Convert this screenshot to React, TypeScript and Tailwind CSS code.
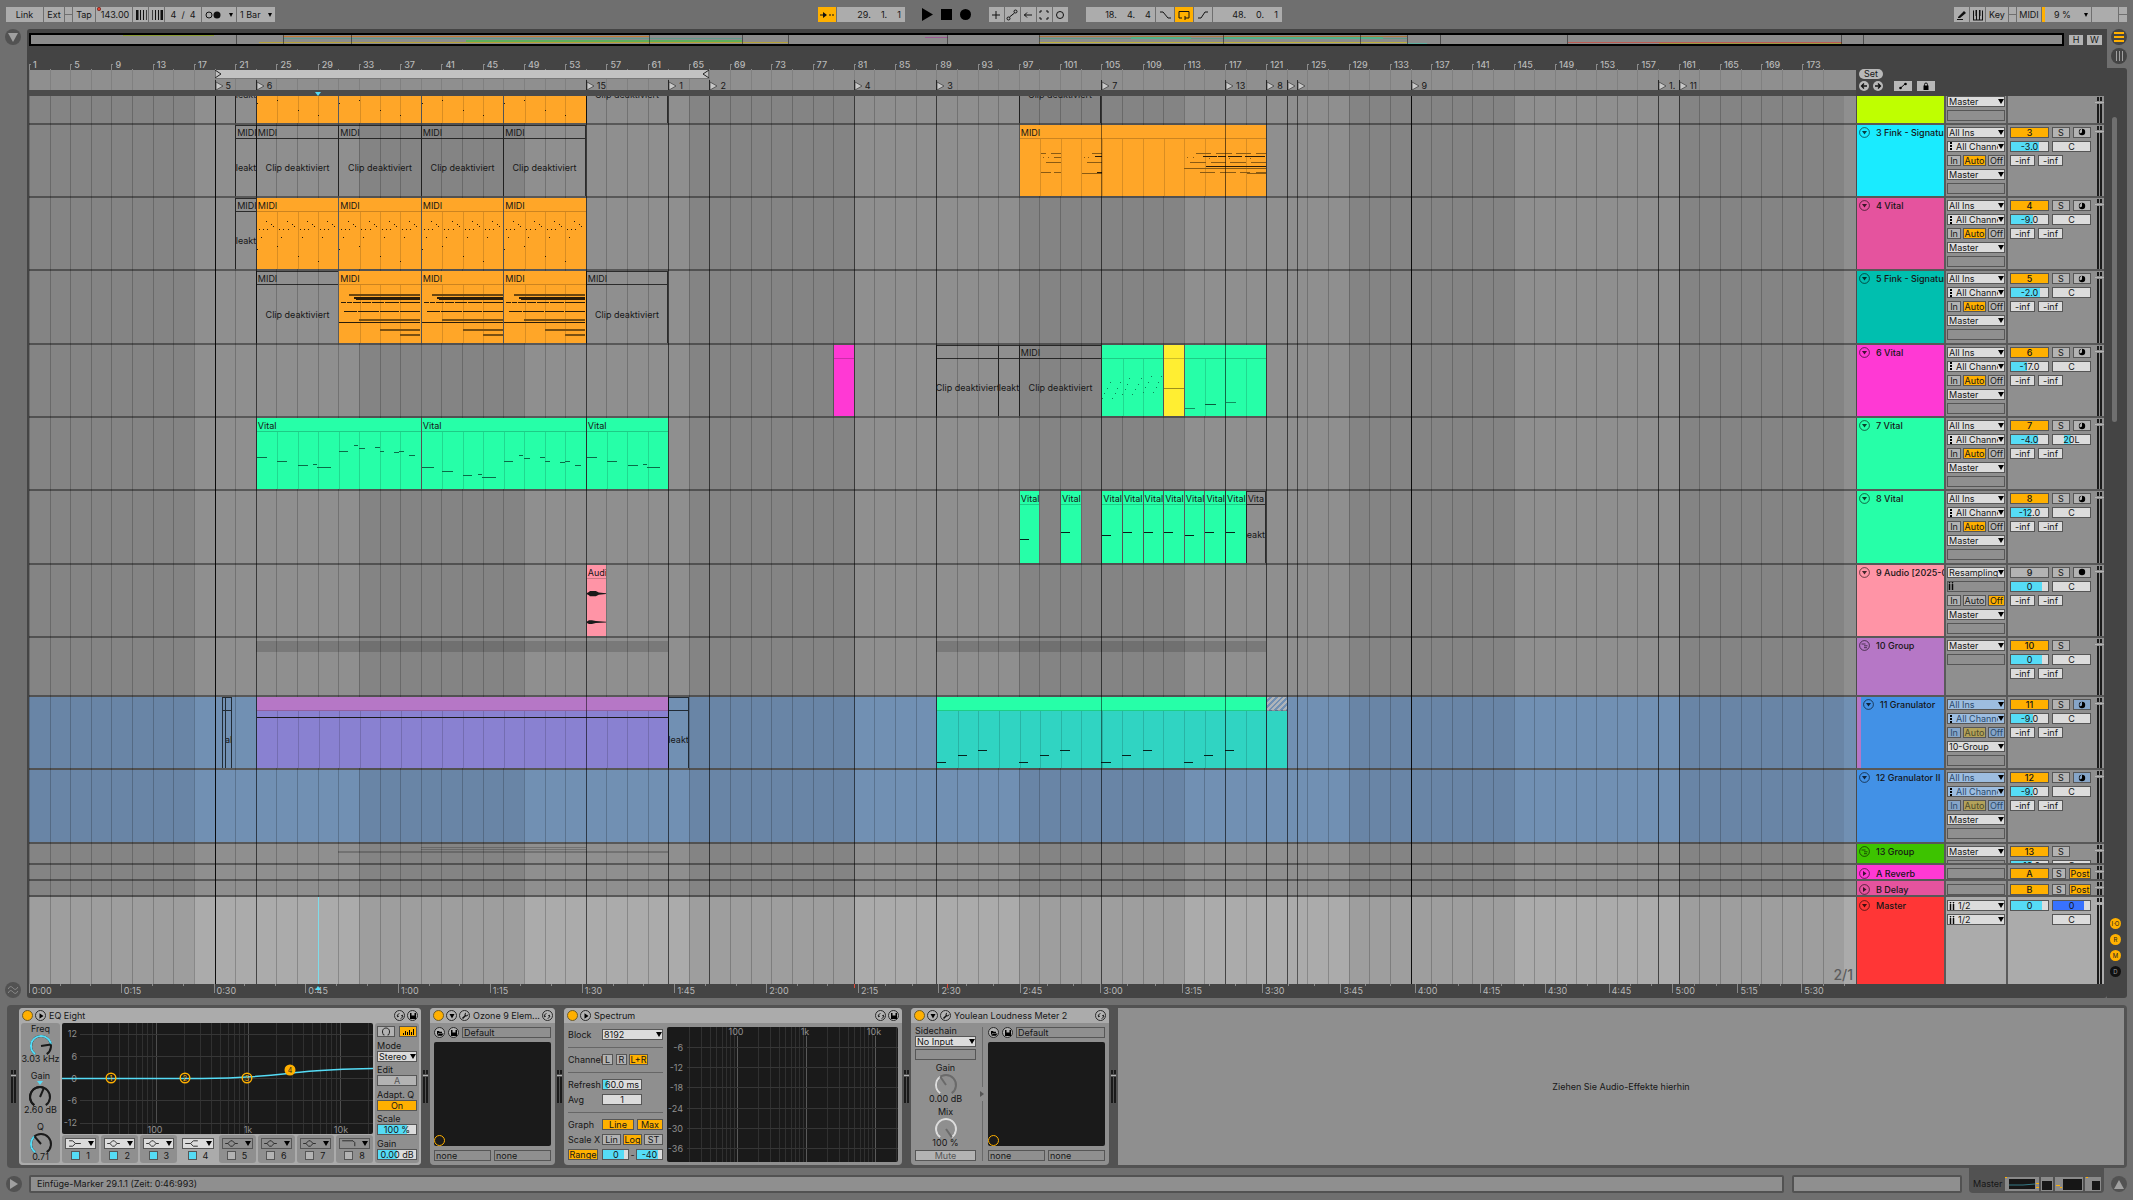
import type { ReactNode } from 'react';
import clsx from 'clsx';

const BARS = 177.2;
const pct = (bar: number) => `${((bar - 1) / BARS) * 100}%`;
const span = (bars: number) => `${(bars / BARS) * 100}%`;

// x, width in tenths of a bar; y, height in pixels of the clip body
type Note = [x: number, y: number, w: number, h?: number, color?: string];

type ClipData = {
  from: number;
  to: number;
  title?: string;
  off?: boolean;
  short?: string;
  head?: string;
  body?: string;
  notes?: Note[];
  kind?: 'audio' | 'group' | 'empty';
};

type TrackData = {
  name: string;
  num?: string;
  color: string;
  type: 'midi' | 'audio' | 'group' | 'return' | 'master';
  clips: ClipData[];
  vol?: string;
  fill?: number;
  pan?: string;
  selected?: boolean;
  nested?: boolean;
  tail?: boolean;
  out?: string;
};

const ORANGE = 'bg-[#ffa628]';
const GREEN = 'bg-[#26ffa8]';

const repeat = (notes: Note[], step: number, count: number): Note[] =>
  Array.from({ length: count }, (_, i) =>
    notes.map(([x, y, w, h, c]): Note => [x + i * step, y, w, h, c]),
  ).flat();

const tinted = (notes: Note[], color: string): Note[] => notes.map(([x, y, w]): Note => [x, y, w, 1, color]);

const dotNotes: Note[] = [
  ...repeat(
    [[2, 17, 1], [6, 17, 1], [10, 17, 1], [9, 9, 1], [14, 12, 1], [16, 14, 1], [4, 25, 1]],
    20,
    4,
  ),
  [0, 37, 1],
  [20, 34, 1],
  [40, 44, 1],
  [60, 49, 1],
];

const chordNotes: Note[] = [
  [10, 9, 70, 2, '#6b460f'],
  [15, 12, 65, 2],
  [17, 14, 63, 1],
  [2, 17, 5], [8, 17, 5], [14, 17, 8], [23, 17, 8], [32, 17, 12], [45, 17, 14], [60, 17, 20],
  [5, 26, 13], [19, 26, 20], [40, 26, 19], [60, 26, 20],
  [20, 34, 60, 2, '#7a5011'],
  [0, 37, 80],
  [40, 44, 40, 2, '#7a5011'],
  [60, 49, 20, 2, '#7a5011'],
];

const B = '#8a5a12';
const finkNotes: Note[] = [
  [20, 14, 5, 1, B], [30, 14, 10, 1, B], [33, 18, 7, 1, B], [22, 18, 1, 1, B], [27, 18, 1, 1, B],
  [25, 23, 15, 1, B], [20, 33, 10, 1, B], [33, 33, 7, 1, B],
  [70, 14, 10, 1, B], [73, 17, 7], [62, 18, 1, 1, B], [66, 18, 1, 1, B], [65, 23, 15, 1, B],
  [60, 34, 20, 1, B], [75, 33, 5],
  [171, 14, 15, 1, B], [191, 14, 15, 1, B], [210, 14, 15, 1, B], [230, 14, 10, 1, B],
  [178, 17, 14], [193, 17, 8], [203, 17, 13], [219, 17, 20],
  [163, 18, 1, 1, B], [168, 18, 1, 1, B], [184, 19, 1, 1, B], [204, 19, 1, 1, B], [224, 19, 1, 1, B],
  [166, 23, 15, 1, B], [186, 23, 15, 1, B], [205, 23, 15, 1, B], [225, 23, 15, 1, B],
  [181, 27, 59, 1], [160, 29, 80, 1, B],
  [175, 33, 15, 1, B], [195, 33, 15, 1, B], [214, 33, 10, 1, B], [230, 33, 10, 1, B], [221, 34, 19, 1, B],
];

const vitalA: Note[] = tinted([[0, 25, 10], [20, 29, 9], [40, 33, 10], [55, 32, 4], [59, 35, 13]], '#0b6b47');
const vitalLong: Note[] = [
  ...vitalA,
  ...tinted([
    [80, 19, 9], [95, 13, 4], [100, 16, 5], [115, 15, 5], [120, 19, 4], [134, 20, 5], [139, 19, 4], [148, 23, 6],
  ], '#0b6b47'),
];
const vitalLow: Note[] = tinted([
  [0, 35, 12], [20, 39, 10], [40, 43, 9], [55, 42, 4], [59, 45, 13],
  [80, 29, 9], [95, 23, 4], [100, 26, 5], [115, 25, 5], [120, 29, 5], [135, 30, 5], [140, 29, 4], [149, 33, 6],
], '#0b6b47');
const sparkle: Note[] = tinted([
  [0, 39, 1], [2, 34, 1], [5, 29, 1], [8, 23, 1], [10, 39, 1], [13, 34, 1], [15, 29, 1], [18, 23, 1],
  [20, 35, 1], [23, 30, 1], [25, 25, 1], [27, 19, 1], [30, 35, 1], [33, 30, 1], [35, 25, 1], [38, 19, 1],
  [40, 33, 1], [42, 28, 1], [45, 23, 1], [48, 17, 1], [50, 33, 1], [53, 28, 1], [55, 23, 1], [58, 17, 1],
], '#0e8458');

const off = (from: number, to: number, title = '', short?: string): ClipData => ({ from, to, title, short, off: true });
const vitalBlip = (from: number, y: number): ClipData => ({
  from,
  to: from + 2,
  title: 'Vital',
  head: GREEN,
  body: GREEN,
  notes: [[0, y, 9, 1, '#04221a']],
});
const midi = (from: number, to: number, notes: Note[]): ClipData => ({
  from, to, title: 'MIDI', head: ORANGE, body: ORANGE, notes,
});

const tracks: TrackData[] = [
  {
    name: '2', color: 'bg-[#bfff00]', type: 'midi', tail: true,
    clips: [off(21, 23, '', 'leakt'), ...[23, 31, 39, 47].map((b) => midi(b, b + 8, dotNotes)), off(55, 63), off(97, 105)],
  },
  {
    name: '3 Fink - Signature', num: '3', color: 'bg-[#1aebff]', type: 'midi', vol: '-3.0', fill: 76,
    clips: [off(21, 23, 'MIDI', 'leakt'), ...[23, 31, 39, 47].map((b) => off(b, b + 8, 'MIDI')), midi(97, 121, finkNotes)],
  },
  {
    name: '4 Vital', num: '4', color: 'bg-[#e5539e]', type: 'midi', vol: '-9.0', fill: 60,
    clips: [off(21, 23, 'MIDI', 'leakt'), ...[23, 31, 39, 47].map((b) => midi(b, b + 8, dotNotes))],
  },
  {
    name: '5 Fink - Signature', num: '5', color: 'bg-[#00bfaf]', type: 'midi', vol: '-2.0', fill: 79,
    clips: [off(23, 31, 'MIDI'), ...[31, 39, 47].map((b) => midi(b, b + 8, chordNotes)), off(55, 63, 'MIDI')],
  },
  {
    name: '6 Vital', num: '6', color: 'bg-[#ff39d4]', type: 'midi', vol: '-17.0', fill: 42,
    clips: [
      { from: 79, to: 81, head: 'bg-[#ff39d4]', body: 'bg-[#ff39d4]' },
      off(89, 95),
      off(95, 97, '', 'leakt'),
      off(97, 105, 'MIDI'),
      { from: 105, to: 111, head: GREEN, body: GREEN, notes: sparkle },
      { from: 111, to: 113, head: 'bg-[#ffee32]', body: 'bg-[#ffee32]', notes: [[0, 29, 20, 1, '#9b8f1c']] },
      {
        from: 113, to: 121, head: GREEN, body: GREEN,
        notes: [[0, 49, 10, 1, '#0f8f5e'], [20, 45, 10, 1, '#0b5a3c'], [40, 43, 10, 1, '#0f8f5e']],
      },
    ],
  },
  {
    name: '7 Vital', num: '7', color: 'bg-[#26ffa8]', type: 'midi', vol: '-4.0', fill: 74, pan: '20L',
    clips: [
      { from: 23, to: 39, title: 'Vital', head: GREEN, body: GREEN, notes: vitalLong },
      { from: 39, to: 55, title: 'Vital', head: GREEN, body: GREEN, notes: vitalLow },
      { from: 55, to: 63, title: 'Vital', head: GREEN, body: GREEN, notes: vitalA },
    ],
  },
  {
    name: '8 Vital', num: '8', color: 'bg-[#26ffa8]', type: 'midi', vol: '-12.0', fill: 54,
    clips: [
      vitalBlip(97, 34), vitalBlip(101, 27), vitalBlip(105, 30), vitalBlip(107, 27), vitalBlip(109, 27),
      vitalBlip(111, 27), vitalBlip(113, 30), vitalBlip(115, 27), vitalBlip(117, 27), off(119, 121, 'Vita', 'eakt'),
    ],
  },
  {
    name: '9 Audio [2025-0', num: '9', color: 'bg-[#ff94a6]', type: 'audio', vol: '0', fill: 83,
    clips: [{ from: 55, to: 57, title: 'Audi', head: 'bg-[#ff94a6]', body: 'bg-[#ff94a6]', kind: 'audio' }],
  },
  {
    name: '10 Group', num: '10', color: 'bg-[#b677c6]', type: 'group', vol: '0', fill: 83,
    clips: [{ from: 23, to: 63, kind: 'group' }, { from: 89, to: 121, kind: 'group' }],
  },
  {
    name: '11 Granulator', num: '11', color: 'bg-[#4291e6]', type: 'midi', vol: '-9.0', fill: 60,
    selected: true, nested: true, out: '10-Group',
    clips: [
      off(19.7, 20, '', ' '),
      off(20, 20.7, '', 'al'),
      { from: 23, to: 63, head: 'bg-[#b677c6]', body: 'bg-[#8981d1]', notes: [[0, 6, 400, 1, '#1a1a1a']] },
      off(63, 65, '', 'leakt'),
      {
        from: 89, to: 121, head: GREEN, body: 'bg-[#30d4c2]',
        notes: repeat(tinted([[0, 51, 9], [20, 44, 9], [40, 39, 9]], '#06231f'), 80, 4),
      },
      {
        from: 121, to: 123, body: 'bg-[#30d4c2]',
        head: 'bg-[repeating-linear-gradient(135deg,#aeb4ba_0_2px,#7190b3_2px_4px)]',
      },
    ],
  },
  {
    name: '12 Granulator II', num: '12', color: 'bg-[#4291e6]', type: 'midi', vol: '-9.0', fill: 60,
    selected: true, clips: [],
  },
  { name: '13 Group', num: '13', color: 'bg-[#3dc300]', type: 'group', vol: '-10.0', fill: 58, clips: [] },
  { name: 'A Reverb', num: 'A', color: 'bg-[#ff39d4]', type: 'return', clips: [] },
  { name: 'B Delay', num: 'B', color: 'bg-[#e5539e]', type: 'return', clips: [] },
  { name: 'Master', color: 'bg-[#ff3636]', type: 'master', clips: [] },
];

const locators = [
  { bar: 19, name: '5', strong: true }, { bar: 23, name: '6' }, { bar: 55, name: '15' }, { bar: 63, name: '1' },
  { bar: 67, name: '2' }, { bar: 81, name: '4' }, { bar: 89, name: '3' }, { bar: 105, name: '7' },
  { bar: 117, name: '13' }, { bar: 121, name: '8' }, { bar: 123, name: '' }, { bar: 124, name: '' },
  { bar: 135, name: '9', strong: true }, { bar: 159, name: '1.' }, { bar: 161, name: '11' },
];

const times: [string, number][] = [
  ['0:00', 1], ['0:15', 9.9], ['0:30', 18.9], ['0:45', 27.8], ['1:00', 36.8], ['1:15', 45.7], ['1:30', 54.6],
  ['1:45', 63.6], ['2:00', 72.5], ['2:15', 81.4], ['2:30', 89.2], ['2:45', 97.1], ['3:00', 104.9], ['3:15', 112.8],
  ['3:30', 120.6], ['3:45', 128.2], ['4:00', 135.4], ['4:15', 141.7], ['4:30', 148], ['4:45', 154.2],
  ['5:00', 160.4], ['5:15', 166.7], ['5:30', 172.9],
];

const evenBars = Array.from({ length: 88 }, (_, i) => 1 + i * 2);

/* ---------- small controls ---------- */

const box = 'box-border h-[11px] border border-[#565656] leading-[9px] text-center overflow-hidden shrink-0';

function Btn({ children, on, tone, className, label }: {
  children?: ReactNode; on?: boolean; tone?: string; className?: string; label?: string;
}) {
  return (
    <button
      aria-label={ label }
      className={ clsx(box, 'flex items-center justify-center whitespace-nowrap', tone ?? (on ? 'bg-[#ffb000]' : 'bg-[#b3b3b3]'), className) }
    >
      { children }
    </button>
  );
}

function Value({ value, fill = 0, from = 0, label, className, color = 'bg-[#55dcf6]' }: {
  value: string; fill?: number; from?: number; label: string; className?: string; color?: string;
}) {
  return (
    <span className={ clsx(box, 'relative block bg-[#dcdcdc]', className) }>
      <span className={ clsx('absolute inset-y-0', color) } style={ { left: `${from}%`, width: `${fill}%` } } />
      <input
        aria-label={ label }
        defaultValue={ value }
        className="relative block h-[9px] w-full bg-transparent text-center leading-[9px] outline-none"
      />
    </span>
  );
}

function Select({ value, label, className, icon, blue }: {
  value: string; label: string; className?: string; icon?: ReactNode; blue?: boolean;
}) {
  return (
    <span className={ clsx(box, 'relative flex items-center pl-px', blue ? 'bg-[#9dbde0] text-[#2c4a6b]' : 'bg-[#dcdcdc]', className) }>
      { icon }
      <select aria-label={ label } className="h-[9px] min-w-0 flex-1 appearance-none overflow-hidden bg-transparent leading-[9px] outline-none">
        <option>{ value }</option>
      </select>
      <svg viewBox="0 0 6 5" className="h-[5px] w-[6px] shrink-0"><path d="M0 0h6L3 5z" /></svg>
    </span>
  );
}

const Slot = ({ className, children }: { className?: string; children?: ReactNode }) => (
  <span className={ clsx(box, 'flex items-center', className) }>{ children }</span>
);

const MidiIcon = () => (
  <svg viewBox="0 0 5 8" className="mr-[2px] h-2 w-[5px] shrink-0"><path d="M1 0h2v2H1zM1 3h2v2H1zM1 6h2v2H1z" /></svg>
);
const StereoIcon = () => (
  <svg viewBox="0 0 6 8" className="mr-[3px] h-2 w-[6px] shrink-0">
    <path d="M1 0h1v1H1zM1 2h1v6H1zM4 0h1v1H4zM4 2h1v6H4z" stroke="#111" strokeWidth=".5" />
  </svg>
);

const Meter = ({ className }: { className?: string }) => (
  <div className={ clsx('flex flex-col gap-px', className) }>
    <div className="flex h-1 justify-center gap-px"><i className="w-[2px] bg-[#1a1a1a]" /><i className="w-[2px] bg-[#1a1a1a]" /></div>
    <div className="h-px bg-[#b3b3b3]" />
    <div className="flex flex-1 justify-center gap-px"><i className="w-[2px] bg-[#1a1a1a]" /><i className="w-[2px] bg-[#1a1a1a]" /></div>
  </div>
);

function Fold({ kind }: { kind: 'down' | 'right' | 'group' }) {
  return (
    <button aria-label="Fold track" className="size-[11px] shrink-0">
      <svg viewBox="0 0 11 11" className="size-[11px]" fill="none" stroke="#000" strokeOpacity=".65">
        <circle cx="5.5" cy="5.5" r="4.9" strokeWidth=".9" />
        { kind === 'down' && <path d="M3 4h5L5.5 7.5z" fill="#000" fillOpacity=".75" stroke="none" /> }
        { kind === 'right' && <path d="M4 3v5l3.500-2.500z" fill="#000" fillOpacity=".75" stroke="none" /> }
        { kind === 'group' && <path d="M2.500 4h4M5 5.800h3.500M5 7.700h3" strokeWidth=".9" /> }
      </svg>
    </button>
  );
}

function Knob({ value, color = '#55dcf6', rest = '#1a1a1a' }: { value: number; color?: string; rest?: string }) {
  const at = (v: number, r: number) => {
    const a = ((125 + v * 290) * Math.PI) / 180;
    return `${(12 + r * Math.cos(a)).toFixed(2)} ${(12 + r * Math.sin(a)).toFixed(2)}`;
  };
  const arc = (a: number, b: number) => `M${at(a, 10)}A10 10 0 ${(b - a) * 290 > 180 ? 1 : 0} 1 ${at(b, 10)}`;
  return (
    <svg viewBox="0 0 24 24" className="h-6 w-6" fill="none" strokeWidth="2">
      <path d={ arc(0, 1) } stroke={ rest } />
      { value > 0 && <path d={ arc(0, value) } stroke={ color } /> }
      <path d={ `M12 12L${at(value, 10)}` } stroke={ rest } />
    </svg>
  );
}

/* ---------- transport ---------- */

const tbtn = 'h-[15px] flex items-center justify-center shrink-0';
const gray = 'bg-[#acacac]';

function TransportIcon({ d, fill }: { d: string; fill?: boolean }) {
  return (
    <svg viewBox="0 0 14 14" className="h-[14px] w-[14px]" fill={ fill ? '#111' : 'none' } stroke={ fill ? 'none' : '#111' }>
      <path d={ d } />
    </svg>
  );
}

function TopBar() {
  return (
    <header className="flex h-[29px] items-start justify-between pt-[7px] pr-[6px] pl-[6px]">
      <div className="flex flex-[49] gap-px">
        <button className={ clsx(tbtn, gray, 'w-[37px]') }>Link</button>
        <button className={ clsx(tbtn, gray, 'w-5') }>Ext</button>
        <div className="flex w-[7px] flex-col gap-px"><i className="flex-1 bg-[#acacac]" /><i className="flex-1 bg-[#acacac]" /></div>
        <button className={ clsx(tbtn, gray, 'w-[22px]') }>Tap</button>
        <label className="relative">
          <input aria-label="Tempo" defaultValue="143.00" className={ clsx(tbtn, gray, 'w-9 pl-[2px] text-center') } />
          <i className="absolute top-0 left-px size-1 rounded-full border border-black/50 bg-[#ff4a36]" />
        </label>
        <button aria-label="Nudge down" className={ clsx(tbtn, gray, 'w-[15px]') }>
          <TransportIcon fill d="M2 2h2.500v10H2zM6 2h1v10H6zM9 2h1v10H9zM12 2h.7v10H12z" />
        </button>
        <button aria-label="Nudge up" className={ clsx(tbtn, gray, 'w-[15px]') }>
          <TransportIcon fill d="M2 2h.7v10H2zM5 2h1v10H5zM8 2h1v10H8zM10.500 2H13v10h-2.500z" />
        </button>
        <input aria-label="Signature" defaultValue="4  /  4" className={ clsx(tbtn, gray, 'w-9 text-center') } />
        <button aria-label="Metronome" className={ clsx(tbtn, gray, 'w-[34px] gap-2') }>
          <svg viewBox="0 0 16 8" className="h-2 w-4"><circle cx="4" cy="4" r="3" fill="none" stroke="#111" /><circle cx="12" cy="4" r="3.500" fill="#111" /></svg>
          <svg viewBox="0 0 4 4" className="size-1"><path d="M0 0h4L2 4z" /></svg>
        </button>
        <label className={ clsx(tbtn, gray, 'w-[38px]') }>
          <select aria-label="Quantization" className="w-7 appearance-none bg-transparent"><option>1 Bar</option></select>
          <svg viewBox="0 0 4 4" className="size-1"><path d="M0 0h4L2 4z" /></svg>
        </label>
      </div>

      <div className="flex items-start gap-px">
        <button aria-label="Follow" className={ clsx(tbtn, 'w-[18px] bg-[#ffb000]') }>
          <TransportIcon fill d="M0 6.500h3V4l4 3-4 3V7.500H0zM9 6.500h2v1H9zM12 6.500h2v1h-2z" />
        </button>
        <input aria-label="Arrangement position" defaultValue="29.    1.    1" className={ clsx(tbtn, gray, 'w-[68px] pr-1 text-right') } />
        <div className="flex h-[15px] w-[82px] items-center justify-center gap-2">
          <button aria-label="Play"><svg viewBox="0 0 11 13" className="h-[13px] w-[11px]"><path d="M0 0v13l11-6.500z" /></svg></button>
          <button aria-label="Stop" className="h-[11px] w-[11px] bg-black" />
          <button aria-label="Record" className="size-[11px] rounded-full bg-black" />
        </div>
        { [
          'M7 3v8M3 7h8',
          'M2 10.500a1.500 1.500 0 1 0 3 0a1.500 1.500 0 1 0-3 0M4.500 9l5-4M9 3.500a1.500 1.500 0 1 0 3 0a1.500 1.500 0 1 0-3 0',
          'M11 7H3M6 4.500L3.500 7L6 9.500',
          'M3 5V3h2M9 3h2v2M11 9v2H9M5 11H3V9',
          'M3.500 7a3.500 3.500 0 1 0 7 0a3.500 3.500 0 1 0-7 0',
        ].map((d) => (
          <button key={ d } aria-label="Automation" className={ clsx(tbtn, gray, 'w-[15px]') }><TransportIcon d={ d } /></button>
        )) }
        <input aria-label="Loop start" defaultValue="18.    4.    4" className={ clsx(tbtn, gray, 'ml-[17px] w-[69px] pr-1 text-right') } />
        <button aria-label="Punch in" className={ clsx(tbtn, gray, 'w-[18px]') }><TransportIcon d="M2 4h3l5 6h3" /></button>
        <button aria-label="Loop" className={ clsx(tbtn, 'w-[18px] bg-[#ffb000]') }><TransportIcon d="M5 10H2V3.500h10V10H8M8 8v4" /></button>
        <button aria-label="Punch out" className={ clsx(tbtn, gray, 'w-[18px]') }><TransportIcon d="M2 10h3l4-6h3" /></button>
        <input aria-label="Loop length" defaultValue="48.    0.    1" className={ clsx(tbtn, gray, 'w-[69px] pr-1 text-right') } />
      </div>

      <div className="flex flex-[51] justify-end gap-px">
        <button aria-label="Draw mode" className={ clsx(tbtn, gray, 'w-[15px]') }><TransportIcon fill d="M3 9l6-6 2 2-6 5H3zM2 11h6v1H2z" /></button>
        <button aria-label="Computer keyboard" className={ clsx(tbtn, gray, 'w-[15px]') }>
          <TransportIcon d="M2.500 2.500v9.500M5.500 2v6M8.500 2v6M11.500 2.500v9.500M5.500 8v4M8.500 8v4M2 12h10M5 2v6M9 2v6" />
        </button>
        <button className={ clsx(tbtn, gray, 'w-[22px]') }>Key</button>
        <div className="flex w-[7px] flex-col gap-px"><i className="flex-1 bg-[#acacac]" /><i className="flex-1 bg-[#acacac]" /></div>
        <button className={ clsx(tbtn, gray, 'w-6') }>MIDI</button>
        <label className={ clsx(tbtn, gray, 'w-[49px] pr-[3px]') }>
          <i className="h-full w-[3px] bg-[#ffb000]" />
          <select aria-label="CPU load" className="flex-1 appearance-none bg-transparent pl-[9px]"><option>9 %</option></select>
          <svg viewBox="0 0 4 4" className="size-1"><path d="M0 0h4L2 4z" /></svg>
        </label>
        <div className={ clsx(tbtn, gray, 'w-[26px]') } />
        <div className="flex w-[8px] flex-col gap-px"><i className="flex-1 bg-[#acacac]" /><i className="flex-1 bg-[#acacac]" /></div>
      </div>
    </header>
  );
}

/* ---------- arrangement ---------- */

function Overview() {
  // x, y, width, height, colour on a 2035 x 9 strip
  const marks: [number, number, number, number, string][] = [
    [92, 0, 91, 1, '#8a9c34'], [252, 1, 367, 1, '#c07a34'], [252, 3, 460, 1, '#5f9a8c'], [228, 7, 530, 1, '#b5a038'],
    [436, 5, 276, 2, '#5fae5a'], [896, 2, 23, 1, '#9c5a92'], [1010, 1, 369, 1, '#a9763e'], [1010, 3, 369, 1, '#5c9a84'],
    [1102, 2, 60, 2, '#4fb28a'], [1195, 2, 160, 2, '#4fb28a'], [1010, 7, 369, 1, '#bdb03c'], [1010, 9, 369, 1, '#a59c48'],
    [1379, 8, 20, 1, '#5faea0'], [1540, 7, 275, 1, '#bb5a52'], [1631, 8, 184, 1, '#9c9a42'],
  ];
  return (
    <div className="h-[13px] flex-1 border-2 border-black bg-[#8b8b8b]">
      <svg viewBox="0 0 2035 9" preserveAspectRatio="none" className="block h-full w-full" shapeRendering="crispEdges">
        { marks.map(([x, y, w, h, c], i) => <rect key={ i } x={ x } y={ y } width={ w } height={ h } fill={ c } />) }
        { [205, 252, 321, 619, 712, 758, 918, 1010, 1194, 1332, 1379, 1412, 1539, 1814, 1836].map((x) => (
          <rect key={ x } x={ x } y="0" width="1" height="9" fill="#000" fillOpacity=".45" />
        )) }
      </svg>
    </div>
  );
}

function Clip({ clip, edge }: { clip: ClipData; edge: boolean }) {
  const { from, to, title, head, body, notes, kind, short } = clip;
  const bars = to - from;
  const style = { left: pct(from), width: span(bars) };

  if (kind === 'group') {
    return <div className="absolute top-[3px] z-20 h-[11px] bg-black/15" style={ style } />;
  }
  if (clip.off) {
    return (
      <div className={ clsx('absolute inset-y-0 z-20 flex flex-col overflow-hidden border-t border-l border-black/70', edge && 'border-r') } style={ style }>
        <div className="h-[13px] shrink-0 border-b border-black/70 pl-px leading-[13px] whitespace-nowrap">{ title }</div>
        <div className="flex flex-1 items-center justify-center overflow-hidden pt-px whitespace-nowrap">{ short ?? 'Clip deaktiviert' }</div>
      </div>
    );
  }

  const lines = bars > 2 ? Array.from({ length: Math.ceil(bars / 2) - 1 }, (_, i) => ((i + 1) * 2 * 100) / bars) : [];
  return (
    <div className="absolute inset-y-0 z-20 flex flex-col overflow-hidden border-l border-black/20" style={ style }>
      <div className={ clsx('h-[14px] shrink-0 border-b border-black/20 pl-px leading-[15px] whitespace-nowrap', head) }>{ title }</div>
      <div className={ clsx('relative flex-1 overflow-hidden', body) }>
        { lines.map((l) => <i key={ l } className="absolute inset-y-0 w-px bg-black/15" style={ { left: `${l}%` } } />) }
        { notes && (
          <svg viewBox={ `0 0 ${bars * 10} 58` } preserveAspectRatio="none" className="absolute top-0 left-0 h-[58px] w-full" shapeRendering="crispEdges">
            { notes.map(([x, y, w, h = 1, c = '#2a1c08'], i) => <rect key={ i } x={ x } y={ y } width={ w } height={ h } fill={ c } />) }
          </svg>
        ) }
        { kind === 'audio' && (
          <svg viewBox="0 0 20 58" preserveAspectRatio="none" className="absolute top-0 left-0 h-[58px] w-full" fill="#1a1a1a">
            <path d="M0 14l2-1 1-1h6l3 1.500 8 .8v.7l-8 .8-3 1.500H3l-1-1-2-1zM0 42.500l2-1.200h3l4 .8 11 .6v.7l-11 .6-4 1H2l-2-1z" />
          </svg>
        ) }
      </div>
    </div>
  );
}

function Clips({ clips }: { clips: ClipData[] }) {
  return clips.map((c) => <Clip key={ c.from } clip={ c } edge={ !clips.some((n) => n.from === c.to) } />);
}

function TrackHeader({ track }: { track: TrackData }) {
  const { type, selected: blue, num } = track;
  const tint = blue ? 'bg-[#86a5c8] text-[#2c4a6b]' : undefined;
  const isMaster = type === 'master';
  const fold = type === 'group' ? 'group' : type === 'return' ? 'right' : 'down';
  const top = type === 'return' || isMaster ? 'pt-[3px]' : 'pt-[2px]';

  return (
    <div className="flex w-[248px] shrink-0 overflow-hidden border-l border-[#4b4b4b]">
      <div className={ clsx('flex w-[87px] shrink-0 overflow-hidden', track.nested ? 'bg-[#b677c6] pl-1' : '') }>
        <div className={ clsx('flex flex-1 items-start gap-[6px] overflow-hidden pl-[2px] leading-[11px] font-medium whitespace-nowrap', top, track.color) }>
          { !track.tail && <Fold kind={ fold } /> }
          { !track.tail && <span>{ track.name }</span> }
        </div>
      </div>

      <div className={ clsx('flex w-16 shrink-0 flex-col gap-[3px] border-r-2 border-l-2 border-[#5a5a5a] pl-px', top, track.tail ? 'justify-end pb-[2px]' : '', isMaster ? 'bg-[#ababab]' : 'bg-[#8f8f8f]') }>
        { track.tail && (
          <>
            <Select label="Output" value="Master" className="w-[58px]" />
            <Slot className="w-[58px]" />
          </>
        ) }
        { !track.tail && (type === 'midi' || type === 'audio') && (
          <>
            <Select blue={ blue } label="Input type" value={ type === 'audio' ? 'Resampling' : 'All Ins' } className="w-[58px]" />
            { type === 'midi'
              ? <Select blue={ blue } label="Input channel" value="All Channels" icon={ <MidiIcon /> } className="w-[58px]" />
              : <Slot className="w-[58px]"><StereoIcon /></Slot> }
            <div className="flex w-[58px] justify-between">
              <Btn tone={ tint } className="w-[14px]">In</Btn>
              <Btn on={ type === 'midi' } tone={ blue ? 'bg-[#b3a25a] text-[#4d4a2c]' : undefined } className="w-[23px]">Auto</Btn>
              <Btn on={ type === 'audio' } tone={ tint } className="w-[17px]">Off</Btn>
            </div>
            <Select label="Output" value={ track.out ?? 'Master' } className="w-[58px]" />
            <Slot className="w-[58px]" />
          </>
        ) }
        { type === 'group' && (
          <>
            <Select label="Output" value="Master" className="w-[58px]" />
            <Slot className="w-[58px]" />
          </>
        ) }
        { type === 'return' && <Slot className="w-[58px]" /> }
        { isMaster && (
          <>
            <Select label="Cue out" value="1/2" icon={ <StereoIcon /> } className="w-[58px]" />
            <Select label="Master out" value="1/2" icon={ <StereoIcon /> } className="w-[58px]" />
          </>
        ) }
      </div>

      <div className={ clsx('flex flex-1 flex-col gap-[3px] pl-[2px]', top, isMaster ? 'bg-[#ababab]' : 'bg-[#8f8f8f]') }>
        { num && (
          <div className="flex gap-[3px]">
            <Btn on={ type !== 'audio' } className="w-[39px] font-medium">{ num }</Btn>
            <Btn className={ type === 'return' ? 'w-[14px]' : 'w-[18px]' }>S</Btn>
            { type === 'return' && <Btn on className="w-[22px]">Post</Btn> }
            { (type === 'midi' || type === 'audio') && (
              <Btn label="Arm" tone={ tint } className="w-[18px]">
                <svg viewBox="0 0 8 8" className="size-2">
                  <circle cx="4" cy="4" r="3.200" />
                  { type === 'midi' && <path d="M4 .5v4L1.800 5.500C.8 3.500 2 1.500 4 .5z" fill={ blue ? '#86a5c8' : '#b3b3b3' } /> }
                </svg>
              </Btn>
            ) }
          </div>
        ) }
        { track.vol && (
          <div className="flex gap-[3px]">
            <Value label="Volume" value={ track.vol } fill={ track.fill } className="w-[39px]" />
            <Value label="Pan" value={ track.pan ?? 'C' } from={ 31 } fill={ track.pan ? 18 : 0 } className="w-[39px]" />
          </div>
        ) }
        { track.vol && (
          <div className="flex gap-[3px]">
            <Value label="Send A" value="-inf" className="w-[25px]" />
            <Value label="Send B" value="-inf" className="w-[25px]" />
          </div>
        ) }
        { isMaster && (
          <>
            <div className="flex gap-[3px]">
              <Value label="Master volume" value="0" fill={ 83 } className="w-[39px]" />
              <Value label="Cue volume" value="0" fill={ 83 } color="bg-[#3872ff]" className="w-[39px]" />
            </div>
            <Value label="Master pan" value="C" className="ml-[42px] w-[39px]" />
          </>
        ) }
      </div>
      <Meter className={ clsx('w-[9px] pt-px', isMaster ? 'bg-[#ababab]' : 'bg-[#8f8f8f]') } />
    </div>
  );
}

function Arrangement() {
  return (
    <div className="flex min-w-0 flex-1 flex-col rounded-tl-[3px] rounded-b-[3px] bg-[#444] pt-1 pr-[3px] pl-[2px]">
      <div className="flex">
        <Overview />
        <div className="flex w-10 items-center justify-between pr-[2px] pl-[5px]">
          <button className="h-[10px] w-[14px] bg-[#b3b3b3] leading-[10px]">H</button>
          <button className="h-[10px] w-[15px] bg-[#b3b3b3] leading-[10px]">W</button>
        </div>
      </div>

      <div className="flex">
        <div className="min-w-0 flex-1">
          <div className="relative h-6 overflow-hidden text-[#b8b8b8]">
            { evenBars.map((b) => (
              <i key={ b } className={ clsx('absolute bottom-0 border-l border-[#8a8a8a]', b % 4 === 1 ? 'h-[6px] w-[2px] border-t' : 'h-px') } style={ { left: pct(b) } } />
            )) }
            { evenBars.filter((b) => b % 4 === 1 && b < 177).map((b) => (
              <span key={ b } className="absolute bottom-0 pl-1 leading-[10px] font-medium" style={ { left: pct(b) } }>{ b }</span>
            )) }
          </div>
          <div className="relative h-5 overflow-hidden bg-[#8f8f8f]">
            { evenBars.map((b) => <i key={ b } className="absolute inset-y-0 w-px bg-black/10" style={ { left: pct(b) } } />) }
            <div className="absolute top-0 flex h-[9px] items-center justify-between border-b border-[#777] bg-[#c2c2c2]" style={ { left: pct(19), width: span(48) } }>
              <svg viewBox="0 0 8 8" className="size-2"><path d="M0 0l6 4-6 4z" fill="#c2c2c2" stroke="#222" /></svg>
              <svg viewBox="0 0 8 8" className="size-2"><path d="M8 0L2 4l6 4z" fill="#c2c2c2" stroke="#222" /></svg>
            </div>
            { locators.map((l) => (
              <button key={ l.bar } className="absolute bottom-0 flex h-[10px] items-center gap-[2px] border-l border-black/70 leading-[10px]" style={ { left: pct(l.bar) } }>
                <svg viewBox="0 0 8 10" className="h-[10px] w-2"><path d="M0 2l7 4-7 4z" fill="#c8c8c8" stroke="#444" strokeWidth=".8" /></svg>
                <span className="pt-px">{ l.name }</span>
              </button>
            )) }
          </div>
          <div className="relative h-[6px] bg-[#4b4b4b]">
            <svg viewBox="0 0 6 4" className="absolute top-[2px] -ml-[3px] h-1 w-[6px]" style={ { left: pct(29) } }><path d="M0 0h6L3 4z" fill="#55dcf6" /></svg>
          </div>
        </div>
        <div className="flex w-[248px] flex-col gap-[2px] pt-[23px] pl-[3px]">
          <button className="h-[10px] w-6 rounded-full bg-[#b8b8b8] leading-[10px]">Set</button>
          <div className="flex items-center gap-1">
            <button aria-label="Previous locator" className="flex size-[10px] items-center justify-center rounded-full bg-[#b8b8b8]">
              <svg viewBox="0 0 8 8" className="size-2"><path d="M7 4H2M4 1.500L1.500 4 4 6.500" fill="none" stroke="#111" strokeWidth="1.300" /></svg>
            </button>
            <button aria-label="Next locator" className="flex size-[10px] items-center justify-center rounded-full bg-[#b8b8b8]">
              <svg viewBox="0 0 8 8" className="size-2"><path d="M1 4h5M4 1.500L6.500 4 4 6.500" fill="none" stroke="#111" strokeWidth="1.300" /></svg>
            </button>
            <button aria-label="Automation mode" className="ml-[7px] flex h-[10px] w-[18px] items-center justify-center bg-[#b8b8b8]">
              <svg viewBox="0 0 10 8" className="h-2 w-[10px]"><path d="M2 6.500L7.500 1.500" stroke="#111" /><circle cx="2.500" cy="6" r="1.300" /><circle cx="7.500" cy="2" r="1.300" /></svg>
            </button>
            <button aria-label="Lock envelopes" className="ml-[1px] flex h-[10px] w-[18px] items-center justify-center bg-[#b8b8b8]">
              <svg viewBox="0 0 8 8" className="size-2"><path d="M1.500 3.500h5V8h-5z" /><path d="M2.500 4V2.500a1.500 1.500 0 0 1 3 0V4" fill="none" stroke="#111" /></svg>
            </button>
          </div>
        </div>
      </div>

      <div className="relative grid min-h-0 flex-1 grid-rows-[minmax(0,86fr)_repeat(7,minmax(0,220fr))_minmax(0,177fr)_repeat(2,minmax(0,220fr))_minmax(0,65fr)_repeat(2,minmax(0,48fr))_minmax(0,260fr)]">
        { tracks.map((t) => (
          <div key={ t.name } className={ clsx('flex overflow-hidden', t.type !== 'master' && 'border-b-2 border-[#585858]') }>
            <div className={ clsx('relative min-w-0 flex-1 overflow-hidden', t.selected ? 'bg-[#7190b3]' : t.type === 'master' ? 'bg-[#ababab]' : 'bg-[#8f8f8f]') }>
              { t.tail
                ? <div className="absolute inset-x-0 bottom-0 h-[71px]"><Clips clips={ t.clips } /></div>
                : <Clips clips={ t.clips } /> }
              { t.name === '13 Group' && (
                <>
                  <i className="absolute top-[3px] z-20 h-[3px] border-y border-black/20" style={ { left: pct(39), width: span(16) } } />
                  <i className="absolute top-[7px] z-20 h-[2px] bg-black/20" style={ { left: pct(31), width: span(32) } } />
                </>
              ) }
              { t.type === 'master' && (
                <>
                  <i className="absolute inset-y-0 z-20 w-px bg-[#7fdcea]" style={ { left: pct(29) } } />
                  <span className="absolute right-[3px] bottom-px z-20 text-[14px] leading-[16px] font-medium text-[#5c5c5c]">2/1</span>
                </>
              ) }
            </div>
            <TrackHeader track={ t } />
          </div>
        )) }
        <div className="pointer-events-none absolute inset-y-0 right-[248px] left-0 overflow-hidden">
          { [1, 33, 65, 97, 129, 161].map((b) => (
            <i key={ b } className="absolute inset-y-0 z-10 bg-black/7" style={ { left: pct(b), width: span(16) } } />
          )) }
          { evenBars.map((b) => <i key={ b } className="absolute inset-y-0 z-10 w-px bg-black/20" style={ { left: pct(b) } } />) }
          { locators.map((l) => (
            <i key={ l.bar } className={ clsx('absolute inset-y-0 z-30 w-px', l.strong ? 'bg-black/90' : 'bg-black/50') } style={ { left: pct(l.bar) } } />
          )) }
        </div>
      </div>

      <div className="flex h-[14px]">
        <div className="relative min-w-0 flex-1 overflow-hidden text-[#b8b8b8]">
          { times.map(([label, bar]) => (
            <span key={ label } className="absolute top-0 h-[9px] border-l border-[#8a8a8a] pt-px pl-[2px] leading-[11px]" style={ { left: pct(bar) } }>{ label }</span>
          )) }
          { times.flatMap(([, bar], i) => {
            const next = times[i + 1]?.[1] ?? bar + 6.2;
            return [1, 2].map((k) => (
              <i key={ `${i}-${k}` } className="absolute top-0 h-[2px] w-px bg-[#8a8a8a]" style={ { left: pct(bar + ((next - bar) * k) / 3) } } />
            ));
          }) }
          <i className="absolute top-0 h-1 w-px bg-[#e04a3a]" style={ { left: pct(81) } } />
          <i className="absolute top-0 h-1 w-px bg-[#e04a3a]" style={ { left: pct(90) } } />
          <svg viewBox="0 0 6 4" className="absolute top-[2px] -ml-[3px] h-1 w-[6px]" style={ { left: pct(29) } }><path d="M0 4h6L3 0z" fill="#55dcf6" /></svg>
        </div>
        <div className="w-[248px]" />
      </div>
    </div>
  );
}

/* ---------- devices ---------- */

const roundBtn = 'flex size-[11px] shrink-0 items-center justify-center rounded-full border border-[#2a2a2a] bg-[#b3b3b3]';
const OnDot = () => <button aria-label="Device on" className="size-[11px] shrink-0 rounded-full border border-[#6b5a2a] bg-[#ffb000]" />;
const SwapBtn = () => (
  <button aria-label="Hot-swap" className={ roundBtn }>
    <svg viewBox="0 0 8 8" className="size-2" fill="none" stroke="#111"><path d="M1.500 4.500a2.500 2.500 0 0 1 2-3M6.500 3.500a2.500 2.500 0 0 1-2 3M1 3.500l.7 1.500 1.300-1M5 4l1.300-1L7 4.500" strokeWidth=".8" /></svg>
  </button>
);
const SaveBtn = () => (
  <button aria-label="Save" className={ roundBtn }>
    <svg viewBox="0 0 8 8" className="size-2"><path d="M1 1h1.500v2.500h3V1H7v6H1z" /></svg>
  </button>
);
const FolderBtn = () => (
  <button aria-label="Open" className={ roundBtn }>
    <svg viewBox="0 0 8 8" className="size-2"><path d="M1 2h2l.6.8H6V4H2.500L1 6.500zM2.800 4.500H7.500L6 6.800H1.500z" /></svg>
  </button>
);

function Device({ title, width, plugin, save, children }: {
  title: string; width: string; plugin?: boolean; save?: boolean; children: ReactNode;
}) {
  return (
    <section className={ clsx('flex shrink-0 flex-col overflow-hidden rounded bg-[#8f8f8f]', width) }>
      <div className="flex h-[15px] shrink-0 items-center gap-[2px] bg-[#ababab] px-[3px]">
        <OnDot />
        <button aria-label="Unfold" className={ roundBtn }>
          <svg viewBox="0 0 8 8" className="size-2">{ plugin ? <path d="M1.500 2h5L4 6.500z" /> : <path d="M2.500 1.200v5.600L6.500 4z" /> }</svg>
        </button>
        { plugin && (
          <button aria-label="Edit plug-in" className={ roundBtn }>
            <svg viewBox="0 0 8 8" className="size-2" fill="none" stroke="#111"><path d="M1.500 6.500L5 3" strokeWidth="1.600" /><path d="M7 2.500a1.500 1.500 0 1 1-2-1.500" /></svg>
          </button>
        ) }
        <h2 className="ml-px flex-1 whitespace-nowrap">{ title }</h2>
        <SwapBtn />
        { save && <SaveBtn /> }
      </div>
      { children }
    </section>
  );
}

const logLines = (left: number, decade: number, width: number) => {
  const out: { x: number; major: boolean }[] = [];
  for (let d = -1; d < 3; d++) {
    for (let n = 1; n < 10; n++) {
      const x = left + (d + Math.log10(n)) * decade;
      if (x > 18 && x < width) out.push({ x: Math.round(x), major: n === 1 });
    }
  }
  return out;
};

function EqGraph() {
  const handles: [number, number, string][] = [[49, 55, '1'], [123, 55, '2'], [185, 55, '3'], [228, 47, '4']];
  return (
    <svg viewBox="0 0 311 111" className="h-[111px] w-[311px] rounded-[2px] bg-[#1a1a1a] text-[9px]">
      { logLines(94, 92, 311).map((l) => (
        <rect key={ l.x } x={ l.x } y="0" width="1" height={ l.major ? 100 : 111 } fill={ l.major ? '#4e4e4e' : '#303030' } />
      )) }
      { [11, 33, 55, 77, 100].map((y) => <rect key={ y } x="18" y={ y } width="293" height="1" fill="#363636" />) }
      <g fill="#909090" textAnchor="end">
        <text x="15" y="14">12</text><text x="15" y="37">6</text><text x="15" y="59">0</text>
        <text x="15" y="81">-6</text><text x="15" y="103">-12</text>
      </g>
      <g fill="#909090" textAnchor="middle">
        <text x="93" y="110">100</text><text x="186" y="110">1k</text><text x="279" y="110">10k</text>
      </g>
      <path d="M0 55.500H140C190 55.500 215 51.500 240 49S280 46 311 45.500" fill="none" stroke="#55dcf6" strokeWidth="1.500" />
      { handles.map(([x, y, n]) => (
        <g key={ n }>
          <circle cx={ x } cy={ y } r="4.800" fill={ n === '4' ? '#ffb000' : 'none' } stroke="#ffb000" strokeWidth="1.400" />
          <text x={ x } y={ y + 3 } textAnchor="middle" fontSize="7" fill={ n === '4' ? '#1a1a1a' : '#ffb000' }>{ n }</text>
        </g>
      )) }
    </svg>
  );
}

const filterShapes = ['M2 2h4l3 3h6M2 8h4l3-3', 'bell', 'bell', 'M1 5h6l3-3h5M7 5l3 3h5', 'bell', 'bell', 'bell', 'M1 2h12l2 2v4'];
const BELL = 'M1 5h3M12 5h3M4 5l3-3h2l3 3-3 3H7z';

function EqEight() {
  return (
    <Device title="EQ Eight" width="w-[402px]" save>
      <div className="flex min-h-0 flex-1 gap-[2px] bg-[#ababab] px-[2px] pb-[2px]">
        <div className="flex w-[39px] shrink-0 flex-col items-center justify-between rounded-[3px] bg-[#8f8f8f] py-px leading-[10px] whitespace-nowrap">
          <div className="flex flex-col items-center"><span>Freq</span><Knob value={ 0.78 } /><span className="-mt-1">3.03 kHz</span></div>
          <div className="flex flex-col items-center">
            <span>Gain</span>
            <svg viewBox="0 0 6 4" className="h-1 w-[6px]"><path d="M0 0h6L3 4z" fill="#55dcf6" /></svg>
            <Knob value={ 0.58 } color="#1a1a1a" />
            <span className="-mt-1">2.60 dB</span>
          </div>
          <div className="flex flex-col items-center"><span>Q</span><Knob value={ 0.36 } /><span className="-mt-1">0.71</span></div>
        </div>
        <div className="flex w-[311px] shrink-0 flex-col justify-between">
          <EqGraph />
          <div className="flex h-7 gap-[2px]">
            { filterShapes.map((shape, i) => (
              <div key={ i } className={ clsx('flex min-w-0 flex-1 flex-col justify-between rounded-[3px] p-[3px]', i !== 3 && 'bg-[#8f8f8f]') }>
                <label className={ clsx(box, 'flex items-center justify-between px-px', i < 4 ? 'bg-[#dcdcdc]' : 'bg-[#8f8f8f]') }>
                  <svg viewBox="0 0 16 10" className="h-[9px] w-[15px] shrink-0" fill="none" stroke="#222"><path d={ shape === 'bell' ? BELL : shape } /></svg>
                  <select aria-label={ `Filter ${i + 1} type` } className="h-[9px] w-0 appearance-none opacity-0"><option>Bell</option></select>
                  <svg viewBox="0 0 6 5" className="h-[5px] w-[6px] shrink-0"><path d="M0 0h6L3 5z" /></svg>
                </label>
                <label className="flex items-center justify-center gap-[6px] leading-[9px]">
                  <input type="checkbox" defaultChecked={ i < 4 } className="size-[9px] appearance-none border border-[#565656] bg-[#b3b3b3] checked:bg-[#55dcf6]" />
                  { i + 1 }
                </label>
              </div>
            )) }
          </div>
        </div>
        <div className="flex min-w-0 flex-1 flex-col justify-between rounded-[3px] bg-[#8f8f8f] px-[2px] py-[3px] leading-[11px] whitespace-nowrap">
          <div className="flex justify-between">
            <Btn label="Audition" className="w-[18px]"><svg viewBox="0 0 10 9" className="h-[9px] w-[10px]" fill="none" stroke="#222"><path d="M3.500 8H2.500C0 3.500 2.500 1 5 1s5 2.500 2.500 7h-1" /></svg></Btn>
            <Btn on label="Analyze" className="w-[18px]"><svg viewBox="0 0 12 9" className="h-[9px] w-3"><path d="M1 6h1v2H1zM3 4h1v4H3zM5 5h1v3H5zM7 3h1v5H7zM9 5h1v3H9zM11 2h1v6h-1z" /></svg></Btn>
          </div>
          <div>Mode<Select label="Mode" value="Stereo" /></div>
          <div>Edit<Btn className="w-full text-[#555]">A</Btn></div>
          <div>Adapt. Q<Btn on className="w-full">On</Btn></div>
          <div>Scale<Value label="Scale" value="100 %" fill={ 75 } /></div>
          <div>Gain<Value label="Output gain" value="0.00 dB" fill={ 50 } /></div>
        </div>
      </div>
    </Device>
  );
}

const field = 'h-[11px] w-0 min-w-0 flex-1 border border-[#565656] bg-transparent pl-px leading-[9px] outline-none';

function PluginBody() {
  return (
    <div className="flex min-w-0 flex-1 flex-col justify-between pt-1 pb-1">
      <div className="flex items-center gap-[3px]">
        <FolderBtn />
        <SaveBtn />
        <input aria-label="Preset" defaultValue="Default" className={ field } />
      </div>
      <div className="flex h-[104px] items-end rounded-[2px] bg-[#1a1a1a]">
        <i className="size-[11px] rounded-full border border-[#ffb000]" />
      </div>
      <div className="flex gap-[3px]">
        <input aria-label="X parameter" defaultValue="none" className={ field } />
        <input aria-label="Y parameter" defaultValue="none" className={ field } />
      </div>
    </div>
  );
}

const SpecRow = ({ label, children }: { label: string; children: ReactNode }) => (
  <div className="flex h-[15px] items-center"><span className="w-[34px] whitespace-nowrap">{ label }</span>{ children }</div>
);

function Spectrum() {
  return (
    <Device title="Spectrum" width="w-[338px]" save>
      <div className="flex flex-1 justify-between pt-1 pr-[4px] pb-[3px] pl-1">
        <div className="flex w-[95px] flex-col justify-between">
          <SpecRow label="Block"><Select label="Block" value="8192" className="w-[61px]" /></SpecRow>
          <hr className="border-[#666]" />
          <SpecRow label="Channel">
            <Btn className="w-[11px]">L</Btn><Btn className="ml-[3px] w-[11px]">R</Btn><Btn on className="ml-[2px] w-[19px]">L+R</Btn>
          </SpecRow>
          <hr className="border-[#666]" />
          <div>
            <SpecRow label="Refresh"><Value label="Refresh" value="60.0 ms" fill={ 13 } className="w-10" /></SpecRow>
            <SpecRow label="Avg"><Value label="Average" value="1" className="w-10" /></SpecRow>
          </div>
          <hr className="border-[#666]" />
          <div>
            <SpecRow label="Graph"><Btn on className="w-8">Line</Btn><Btn on className="ml-[3px] w-[26px]">Max</Btn></SpecRow>
            <SpecRow label="Scale X">
              <Btn className="w-[19px]">Lin</Btn><Btn on className="ml-[2px] w-[19px]">Log</Btn><Btn className="ml-[2px] w-[19px]">ST</Btn>
            </SpecRow>
            <div className="flex h-[15px] items-center justify-between">
              <Btn on className="w-[30px]">Range</Btn>
              <Value label="Range high" value="0" fill={ 83 } className="ml-[3px] w-[27px]" />-
              <Value label="Range low" value="-40" fill={ 83 } className="w-[27px]" />
            </div>
          </div>
        </div>
        <svg viewBox="0 0 231 135" className="h-[135px] w-[231px] rounded-[2px] bg-[#1a1a1a] text-[9px]">
          { logLines(70, 69, 231).map((l) => (
            <rect key={ l.x } x={ l.x } y={ l.major ? 9 : 0 } width="1" height="135" fill={ l.major ? '#5a5a5a' : '#303030' } />
          )) }
          { [20, 40, 60, 81, 101, 121].map((y, i) => (
            <g key={ y }>
              <rect x="20" y={ y } width="211" height="1" fill="#363636" />
              <text x="16" y={ y + 4 } textAnchor="end" fill="#909090">{ -6 * (i + 1) }</text>
            </g>
          )) }
          <g fill="#909090" textAnchor="middle"><text x="69" y="8">100</text><text x="138" y="8">1k</text><text x="207" y="8">10k</text></g>
        </svg>
      </div>
    </Device>
  );
}

const DeviceMeter = () => (
  <div className="flex w-[9px] shrink-0 items-center justify-center"><Meter className="h-[33px] w-[5px]" /></div>
);

function DeviceChain() {
  return (
    <div className="mr-[6px] ml-[7px] flex h-[163px] shrink-0 rounded bg-[#525252] py-[3px] pr-[3px]">
      <div className="flex w-3 shrink-0 items-center justify-center"><Meter className="h-[33px] w-[5px]" /></div>
      <EqEight />
      <DeviceMeter />
      <Device title="Ozone 9 Elem..." width="w-[125px]" plugin>
        <div className="flex min-h-0 flex-1 px-1"><PluginBody /></div>
      </Device>
      <DeviceMeter />
      <Spectrum />
      <DeviceMeter />
      <Device title="Youlean Loudness Meter 2" width="w-[198px]" plugin>
        <div className="flex min-h-0 flex-1 px-1">
          <div className="flex w-[61px] shrink-0 flex-col justify-between pt-[2px] pb-1 leading-[11px]">
            <div>
              Sidechain
              <Select label="Sidechain" value="No Input" />
              <Slot className="mt-[2px]" />
            </div>
            <div className="flex flex-col items-center">
              Gain<Knob value={ 0.38 } color="#dcdcdc" rest="#6a6a6a" /><span className="-mt-1">0.00 dB</span>
            </div>
            <div className="flex flex-col items-center">
              Mix<Knob value={ 1 } color="#dcdcdc" rest="#6a6a6a" /><span className="-mt-1">100 %</span>
            </div>
            <Btn className="w-full text-[#555]">Mute</Btn>
          </div>
          <div className="flex w-[12px] shrink-0 flex-col items-center gap-1 py-1">
            <i className="w-px flex-1 bg-[#6a6a6a]" />
            <svg viewBox="0 0 4 6" className="h-[6px] w-1"><path d="M0 0l4 3-4 3z" fill="#555" /></svg>
            <i className="w-px flex-1 bg-[#6a6a6a]" />
          </div>
          <PluginBody />
        </div>
      </Device>
      <DeviceMeter />
      <div className="flex flex-1 items-center justify-center bg-[#8f8f8f]">Ziehen Sie Audio-Effekte hierhin</div>
    </div>
  );
}

function StatusBar() {
  return (
    <footer className="mt-[7px] mb-[7px] flex h-[18px] shrink-0 items-stretch pr-[6px] pl-[6px]">
      <button aria-label="Show info" className="flex size-4 items-center justify-center self-center rounded-full bg-[#525252]">
        <svg viewBox="0 0 8 10" className="h-[10px] w-2"><path d="M0 0v10l8-5z" fill="#a0a0a0" /></svg>
      </button>
      <div className="ml-[7px] flex flex-1 items-center rounded-[2px] border-2 border-[#525252] bg-[#8f8f8f] pl-[6px]">Einfüge-Marker 29.1.1 (Zeit: 0:46:993)</div>
      <div className="ml-2 w-[170px] rounded-[2px] border-2 border-[#525252] bg-[#8f8f8f]" />
      <div className="-mt-[9px] ml-[7px] flex w-[135px] items-center justify-between rounded-b bg-[#525252] pt-2 pr-[3px] pl-1">
        Master
        <svg viewBox="0 0 96 14" className="h-[14px] w-24">
          <path d="M0 0h34v14H0zM36 0h12v14H36zM50 0h28v14H50zM80 0h16v14H80z" fill="#8a8a8a" />
          <path d="M4 2h26v10H4zM37 4h10v9H37zM58 2h19v11H58zM87 4h8v9h-8z" fill="#161616" />
          <path d="M4 8h14l12-1" stroke="#55dcf6" strokeWidth=".5" fill="none" />
          <path d="M31 6h3v1h-3zM31 10h3v1h-3zM51 8h4v1h-4zM55 10h2v1h-2zM0 0h2v1H0zM81 0h2v1h-2z" fill="#ffb000" />
        </svg>
      </div>
      <button aria-label="Hide devices" className="ml-[7px] flex size-4 items-center justify-center self-center rounded-full bg-[#525252]">
        <svg viewBox="0 0 10 9" className="h-[9px] w-[10px]"><path d="M5 0l5 9H0z" fill="#a0a0a0" /></svg>
      </button>
    </footer>
  );
}

const sideDots: [string, string][] = [
  ['I·O', 'bg-[#ffb000] text-[#222]'],
  ['R', 'bg-[#ffb000] text-[#222]'],
  ['M', 'bg-[#ffb000] text-[#222]'],
  ['D', 'bg-[#111] text-[#999]'],
];

export default function App() {
  return (
    <main className="flex h-screen flex-col overflow-hidden bg-[#6f6f6f] font-[Inter,sans-serif] text-[9px] text-[#161616]">
      <TopBar />
      <div className="mb-[7px] flex min-h-0 flex-1">
        <div className="flex w-[27px] flex-col items-center justify-between pr-px">
          <button aria-label="Show browser" className="flex size-4 items-center justify-center rounded-full bg-[#525252]">
            <svg viewBox="0 0 10 9" className="h-[9px] w-[10px]"><path d="M0 0h10L5 9z" fill="#a0a0a0" /></svg>
          </button>
          <button aria-label="Show groove pool" className="flex size-4 items-center justify-center rounded-full bg-[#525252]">
            <svg viewBox="0 0 10 8" className="h-2 w-[10px]" fill="none" stroke="#8f8f8f"><path d="M0 3c2-3 3-3 5-1s3 2 5-1M0 7c2-3 3-3 5-1s3 2 5-1" /></svg>
          </button>
        </div>
        <Arrangement />
        <div className="mr-[6px] flex w-5 flex-col">
          <div className="flex h-[39px] flex-col items-end gap-[3px]">
            <button aria-label="Arrangement view" className="flex size-4 flex-col items-center justify-center gap-[2px] rounded-full bg-[#444]">
              <i className="h-[2px] w-[10px] bg-[#ffb000]" /><i className="h-[2px] w-[10px] bg-[#ffb000]" /><i className="h-[2px] w-[10px] bg-[#ffb000]" />
            </button>
            <button aria-label="Session view" className="flex size-4 items-center justify-center gap-[2px] rounded-full bg-[#444]">
              <i className="h-[10px] w-px bg-[#a0a0a0]" /><i className="h-[10px] w-px bg-[#a0a0a0]" /><i className="h-[10px] w-px bg-[#a0a0a0]" />
            </button>
          </div>
          <div className="flex flex-1 flex-col justify-between rounded-r-[3px] bg-[#444] pt-[49px] pb-[21px]">
            <div className="ml-[5px] h-[305px] w-[5px] rounded-full bg-[#6f6f6f]" />
            <div className="ml-[3px] flex flex-col gap-[5px]">
              { sideDots.map(([label, tone]) => (
                <button key={ label } className={ clsx('flex size-[11px] items-center justify-center rounded-full text-[6px] leading-[6px] whitespace-nowrap', tone) }>{ label }</button>
              )) }
            </div>
          </div>
        </div>
      </div>
      <DeviceChain />
      <StatusBar />
    </main>
  );
}
